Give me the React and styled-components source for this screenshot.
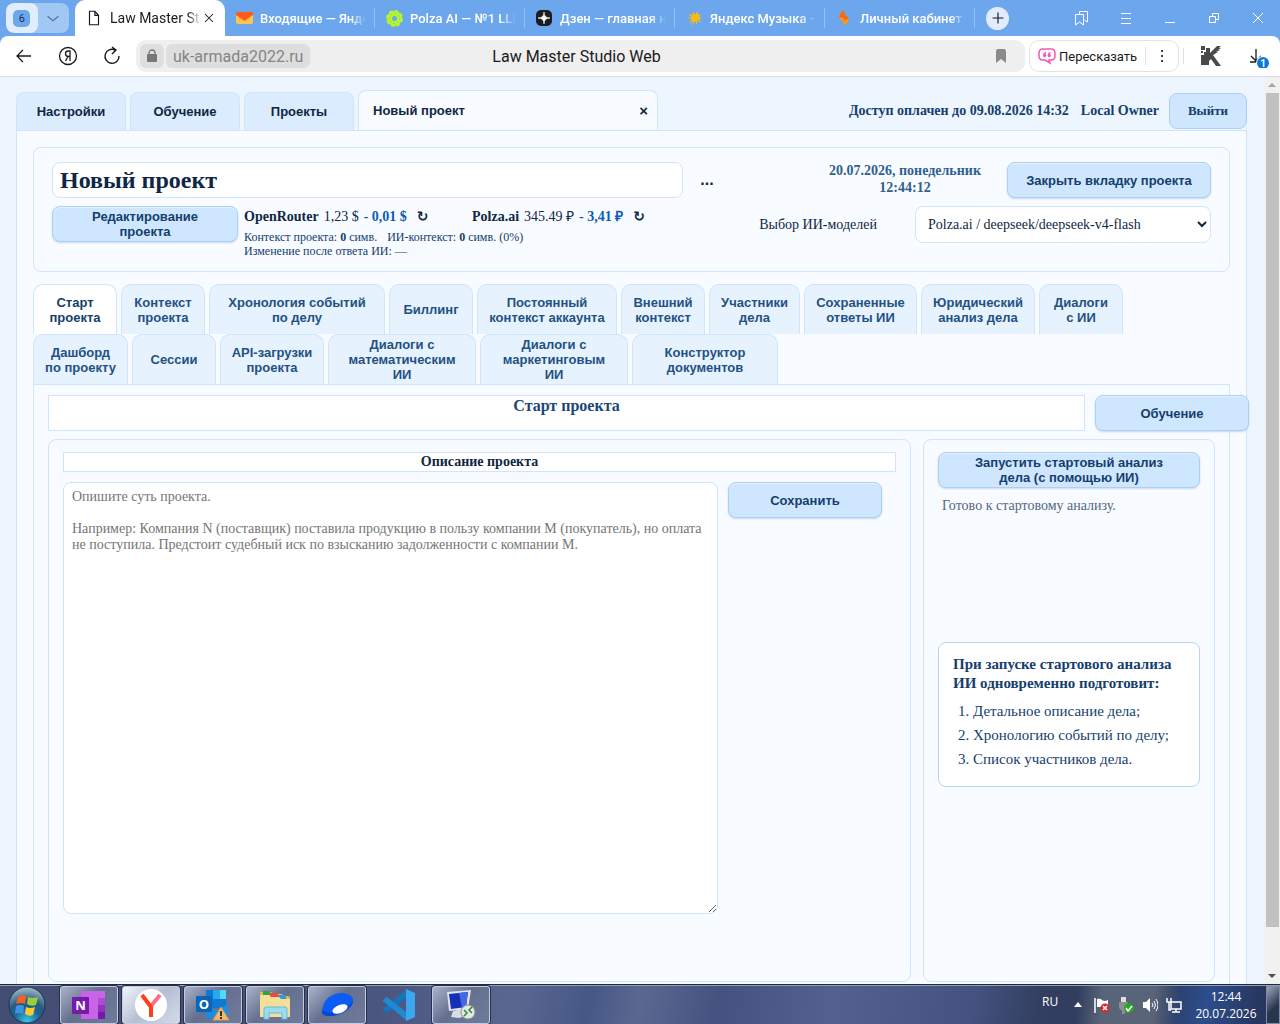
import React from 'react';
import styled, { createGlobalStyle, css } from 'styled-components';

const serif = '"Liberation Serif", "Times New Roman", serif';
const sans = '"Liberation Sans", Arial, sans-serif';
const ui = 'Roboto, "Noto Sans", sans-serif';

const GlobalStyle = createGlobalStyle`
  * { box-sizing: border-box; }
  body {
    margin: 0;
    overflow: hidden;
    color: #0f2744;
    font-family: ${serif};
    font-size: 14px;
  }
  button, input, select, textarea { font: inherit; color: inherit; margin: 0; }
  button { padding: 0; border: 0; background: none; }
  h1, h2, p, ol { margin: 0; }
`;

const Desktop = styled.div`
  display: flex;
  flex-direction: column;
  height: 100vh;
`;

/* browser window */

const TabStrip = styled.div`
  display: flex;
  align-items: center;
  flex: none;
  height: 36px;
  padding-left: 6px;
  background: #6ca7ee;
  font-family: ${ui};
`;

const TabGroup = styled.div`
  display: flex;
  width: 63px;
  height: 30px;
  margin-right: 6px;
  border-radius: 8px;
  background: #a1c7f4;
  overflow: hidden;
`;

const GroupButton = styled.button`
  display: grid;
  place-items: center;
  width: 32px;
  border-radius: 8px;
  background: ${({ $light }) => ($light ? '#e1edfc' : 'transparent')};
`;

const GroupCount = styled.span`
  display: grid;
  place-items: center;
  width: 17px;
  height: 17px;
  border-radius: 5px;
  background: #6ca7ee;
  color: #1c3150;
  font-size: 11px;
`;

const BrowserTab = styled.div`
  display: flex;
  align-items: center;
  flex: none;
  gap: 7px;
  width: 150px;
  height: 20px;
  padding-left: 10px;
  border-right: 1px solid #95c0f3;
  color: #fff;
  font-size: 13px;
  font-weight: 500;
  white-space: nowrap;
  ${({ $active }) => $active && css`
    height: 36px;
    padding-right: 8px;
    border: 0;
    border-radius: 10px 10px 0 0;
    background: #fff;
    color: #1a1a1a;
    font-size: 14px;
    font-weight: 400;
  `}
`;

const TabIcon = styled.span`
  display: grid;
  place-items: center;
  flex: none;
  width: 18px;
`;

const BrowserTabTitle = styled.span`
  flex: 1;
  overflow: hidden;
  margin-right: ${({ $active }) => ($active ? '-7px' : '8px')};
  mask-image: linear-gradient(to right, #000 85%, transparent);
`;

const IconButton = styled.button`
  display: grid;
  place-items: center;
  flex: none;
  width: ${({ $width }) => $width || 44}px;
  height: 30px;
`;

const NewTab = styled(IconButton)`
  width: 23px;
  height: 23px;
  margin: 0 auto 0 11px;
  border-radius: 50%;
  background: #e1edfc;
`;

const ToolbarBack = styled.div`
  flex: none;
  background: #6ca7ee;
`;

const Toolbar = styled.div`
  display: flex;
  align-items: center;
  height: 41px;
  padding-left: 2px;
  border-bottom: 1px solid #d5dbe3;
  border-radius: 8px 8px 0 0;
  background: #fff;
  color: #1a1a1a;
  font-family: ${ui};
`;

const AddressBar = styled.div`
  display: grid;
  grid-template-columns: 1fr auto 1fr;
  align-items: center;
  flex: 1;
  height: 32px;
  margin-left: 2px;
  padding: 0 12px 0 4px;
  border-radius: 10px;
  background: #efefef;
  font-size: 16px;
`;

const AddressSite = styled.div`
  display: flex;
  gap: 2px;
`;

const Chip = styled.button`
  display: grid;
  place-items: center;
  height: 24px;
  padding: 0 7px;
  border-radius: 6px;
  background: #dedede;
  color: #858585;
`;

const BookmarkButton = styled(IconButton)`
  width: 24px;
  justify-self: end;
`;

const Retell = styled.div`
  display: flex;
  align-items: center;
  width: 150px;
  height: 32px;
  margin-left: 4px;
  padding-left: 8px;
  border: 1px solid #e3e3e3;
  border-radius: 10px;
  font-size: 13px;
`;

const RetellButton = styled.button`
  display: flex;
  align-items: center;
  gap: 3px;
  flex: 1;
  border-right: 1px solid #e3e3e3;
`;

const ToolbarDivider = styled.span`
  width: 1px;
  height: 16px;
  margin-left: 4px;
  background: #dedede;
`;

/* page */

const Viewport = styled.div`
  display: flex;
  flex: 1;
  min-height: 0;
`;

const Page = styled.main`
  flex: 1;
  min-width: 0;
  padding: 13px 17px 0 16px;
  overflow: hidden;
  background: #edf5ff;
`;

const Scrollbar = styled.div`
  display: flex;
  flex-direction: column;
  align-items: center;
  flex: none;
  width: 16px;
  background: #f1f1f1;
  svg { flex: none; }
`;

const ScrollThumb = styled.div`
  flex: 834;
  width: 13px;
  background: #c1c1c1;
`;

const ScrollTrack = styled.div`
  flex: 41;
`;

const TopBar = styled.header`
  display: flex;
  align-items: flex-end;
  gap: 4px;
  height: 40px;
`;

const TopTab = styled.button`
  width: 110px;
  height: 38px;
  border: 1px solid #cfe5fd;
  border-bottom: 0;
  border-radius: 8px 8px 0 0;
  background: #dcecff;
  font: bold 13px ${sans};
`;

const ProjectTab = styled.div`
  display: flex;
  align-items: center;
  justify-content: space-between;
  width: 300px;
  height: 40px;
  padding: 0 9px 0 14px;
  border: 1px solid #cfe5fd;
  border-bottom: 0;
  border-radius: 8px 8px 0 0;
  background: #f8fbff;
  button { font: bold 13px ${sans}; }
`;

const CloseProject = styled.button`
  && { font-size: 15px; }
`;

const Account = styled.div`
  display: flex;
  align-items: center;
  gap: 12px;
  height: 38px;
  margin-left: auto;
  color: #153e6e;
  font-weight: bold;
  white-space: nowrap;
`;

const Button = styled.button`
  flex: none;
  width: ${({ $width }) => ($width ? `${$width}px` : '100%')};
  height: 36px;
  border: 1px solid #a9d0f6;
  border-radius: 8px;
  background: #cfe6ff;
  box-shadow: inset 0 1px 0 #e6f2ff, 0 1px 2px rgba(30, 80, 140, 0.2);
  color: #153e6e;
  font: bold 13px/15px ${sans};
  white-space: pre-line;
`;

const LogoutButton = styled(Button)`
  margin-left: -2px;
  box-shadow: none;
  font: bold 13px ${serif};
`;

const Panel = styled.div`
  min-height: 100%;
  padding: 16px;
  border: 1px solid #cfe5fd;
  background: #f8fbff;
`;

const ProjectHeader = styled.section`
  display: flex;
  flex-direction: column;
  gap: 8px;
  padding: 14px 18px 13px;
  border: 1px solid #cfe5fd;
  border-radius: 8px;
`;

const HeaderRow = styled.div`
  display: grid;
  grid-template-columns: 1fr 120px 204px 204px;
  align-items: center;
`;

const ProjectName = styled.input`
  width: 100%;
  height: 36px;
  padding: 0 7px;
  border: 1px solid #cfe5fd;
  border-radius: 8px;
  background: #fff;
  font-size: 24px;
  font-weight: bold;
`;

const MoreButton = styled.button`
  width: 48px;
  height: 36px;
  font: bold 16px ${sans};
`;

const DateTime = styled.time`
  padding-bottom: 2px;
  color: #315f8f;
  font-weight: bold;
  line-height: 17px;
  text-align: center;
  white-space: pre-line;
`;

const InfoRow = styled.div`
  display: flex;
  align-items: flex-start;
  gap: 6px;
`;

const Usage = styled.div`
  flex: 1;
  color: #153e6e;
  font-size: 12px;
  line-height: 14px;
`;

const Balances = styled.div`
  display: flex;
  height: 24px;
  color: #0f2744;
  font-size: 14px;
  line-height: 22px;
`;

const Balance = styled.div`
  display: flex;
  gap: 5px;
  min-width: 228px;
`;

const RefreshButton = styled.button`
  height: 20px;
  margin-left: 5px;
  font: bold 14px/20px "DejaVu Sans", sans-serif;
`;

const Change = styled.strong`
  color: #0b5bb8;
`;

const ContextLine = styled.div`
  display: flex;
  gap: 10px;
`;

const ModelPicker = styled.div`
  display: flex;
  align-items: center;
  gap: 38px;
`;

const ModelSelect = styled.select`
  width: 296px;
  height: 37px;
  padding: 0 8px;
  border: 1px solid #cfe5fd;
  border-radius: 8px;
  background: #fff;
`;

const SectionTabs = styled.nav`
  display: flex;
  flex-wrap: wrap;
  column-gap: 4px;
  margin-top: 12px;
  padding-right: 16px;
`;

const SectionTab = styled.button`
  width: ${({ $width }) => $width}px;
  height: 50px;
  border: 1px solid #cfe5fd;
  border-bottom: 0;
  border-radius: 10px 10px 0 0;
  background: ${({ $active }) => ($active ? '#fff' : '#e7f2ff')};
  color: ${({ $active }) => ($active ? '#153e6e' : '#235182')};
  font: bold 13px/15px ${sans};
  white-space: pre-line;
`;

const SectionPanel = styled.section`
  padding: 10px 14px 14px;
  border: 1px solid #cfe5fd;
  border-bottom: 0;
`;

const SectionHead = styled.div`
  display: flex;
  gap: 10px;
  margin-right: -34px;
`;

const SectionTitle = styled.h1`
  flex: 1;
  height: 36px;
  border: 1px solid #cfe5fd;
  background: #fff;
  color: #1c4778;
  font-size: 16px;
  line-height: 20px;
  text-align: center;
`;

const Columns = styled.div`
  display: grid;
  grid-template-columns: 1fr 292px;
  gap: 12px;
  margin-top: 8px;
`;

const Card = styled.div`
  min-height: 543px;
  padding: 12px 14px;
  border: 1px solid #cfe5fd;
  border-radius: 8px;
`;

const CardTitle = styled.h2`
  height: 20px;
  margin-bottom: 10px;
  border: 1px solid #cfe5fd;
  background: #fff;
  font-size: 14px;
  line-height: 18px;
  text-align: center;
`;

const Editor = styled.div`
  display: flex;
  align-items: flex-start;
  gap: 10px;
  padding-right: 14px;
`;

const Description = styled.textarea`
  flex: 1;
  height: 432px;
  padding: 6px 8px;
  border: 1px solid #cfe5fd;
  border-radius: 8px;
  background: #fff;
  line-height: 16px;
  resize: both;
  &::placeholder { color: #757575; }
`;

const Status = styled.p`
  height: 154px;
  padding: 10px 4px;
  color: #52677f;
  line-height: 16px;
`;

const Note = styled.div`
  padding: 12px 14px 15px;
  border: 1px solid #b5d6f8;
  border-radius: 8px;
  background: #fff;
  color: #153e6e;
  font-size: 15px;
  line-height: 19px;
`;

const NoteList = styled.ol`
  padding: 6px 0 0 20px;
  line-height: 24px;
`;

/* taskbar */

const Taskbar = styled.footer`
  display: flex;
  align-items: center;
  flex: none;
  height: 40px;
  padding-left: 8px;
  border-top: 1px solid #202a3a;
  box-shadow: inset 0 1px 0 #8aa0b8;
  background:
    linear-gradient(95deg, transparent 84%, #5a6478 86% 90%, transparent 92%),
    linear-gradient(100deg, #434d72 0%, #4b5680 30%, #5a6891 40%, #475784 46%, #5a6891 50%, #44527f 56%, #52618d 65%, #43527f 76%, #323f60 81%, #2c3a5c 90%, #2d4d8c 94%, #283760 98%);
  color: #fff;
  font: 12px "Open Sans", "Noto Sans", sans-serif;
`;

const StartButton = styled.button`
  width: 38px;
  height: 38px;
  margin-right: 14px;
`;

const TaskButton = styled.button`
  display: grid;
  place-items: center;
  width: 58px;
  height: 38px;
  margin-right: 4px;
  border: 1px solid ${({ $plain }) => ($plain ? 'transparent' : '#c4cbdc')};
  border-radius: 3px;
  background: ${({ $plain, $active }) => {
    if ($plain) return 'none';
    return $active
      ? 'linear-gradient(135deg, #f2f5fa, #b5bfd3 50%, #d5dae7)'
      : 'linear-gradient(135deg, #a9b2c9, #65708f 45%, #707b9c)';
  }};
  box-shadow: ${({ $plain }) => ($plain ? 'none' : '0 0 0 1px #28314c')};
`;

const Tray = styled.div`
  display: flex;
  align-items: center;
  margin-left: auto;
  height: 100%;
`;

const Language = styled.span`
  width: 24px;
  padding-bottom: 6px;
`;

const Clock = styled.time`
  width: 80px;
  line-height: 17px;
  text-align: center;
  white-space: pre-line;
`;

const ShowDesktop = styled.button`
  width: 14px;
  height: 38px;
  border: 1px solid #7e8ba0;
  background: linear-gradient(135deg, #9aa4b3, #29354f 60%);
`;

const TrayButton = styled.button`
  display: grid;
  place-items: center;
  width: 24px;
  height: 24px;
`;

const Line = ({ size = 20, d, color = '#1a1a1a', width = 1 }) => (
  <svg width={size} height={size} viewBox="0 0 20 20" fill="none" stroke={color} strokeWidth={width}>
    <path d={d} />
  </svg>
);

const MailIcon = () => (
  <svg width="17" height="14" viewBox="0 0 17 14">
    <rect y="1" width="17" height="12" rx="2" fill="#ffc44d" />
    <path d="M0 2q0-1 1-1h15q1 0 1 1v2L8.500 10 0 4z" fill="#ff5a1f" />
  </svg>
);

const PolzaIcon = () => (
  <svg width="17" height="17" viewBox="0 0 17 17">
    <circle cx="8.500" cy="8.500" r="5" fill="none" stroke="#b4f52c" strokeWidth="5" />
    <circle cx="8.500" cy="8.500" r="7" fill="none" stroke="#b4f52c" strokeWidth="3" strokeDasharray="3.500 2" />
    <circle cx="8.500" cy="8.500" r="5" fill="none" stroke="#6ca7ee" strokeDasharray="1 2.900" />
  </svg>
);

const ZenIcon = () => (
  <svg width="16" height="16" viewBox="0 0 16 16">
    <rect width="16" height="16" rx="5" fill="#1b1d21" />
    <path d="M8 2q0 6 6 6-6 0-6 6 0-6-6-6 6 0 6-6z" fill="#fff" stroke="#fff" strokeWidth=".6" />
  </svg>
);

const MusicIcon = () => (
  <svg width="15" height="15" viewBox="0 0 15 15">
    <path
      d="M6 0l2 4 3-4 0 4 3-1-2 3 3 1-3 1 2 4-4-3 0 5-2-4-3 5 1-5-4 2 3-4-5-1 5-1-4-3 5 1z"
      fill="#ffbc0d"
    />
  </svg>
);

const CabinetIcon = () => (
  <svg width="12" height="16" viewBox="0 0 12 16">
    <path d="M6 0l1 5 4 3-5 3-2-4-3 1 1-4z" fill="#ff6a00" />
    <path d="M6 16l-1-5-4-2 3-2 3 4 4-3-1 4z" fill="#ff9416" />
  </svg>
);

const browserTabs = [
  { title: 'Входящие — Яндекс', icon: <MailIcon /> },
  { title: 'Polza AI — №1 LLM', icon: <PolzaIcon /> },
  { title: 'Дзен — главная новости', icon: <ZenIcon /> },
  { title: 'Яндекс Музыка — со', icon: <MusicIcon /> },
  { title: 'Личный кабинет — ', icon: <CabinetIcon /> },
];

const windowButtons = [
  { label: 'Закладки', d: 'M3.500 6.500h8v10.500l-4-3-4 3zM7.500 6.500v-3h8v10.500l-3-2' },
  { label: 'Меню', d: 'M5 5.500h10M5 10.500h10M5 15.500h10' },
  { label: 'Свернуть', d: 'M5 14.500h10' },
  { label: 'Восстановить', d: 'M5.500 8.500h6v6h-6zM8.500 8V5.500h6v6h-3' },
  { label: 'Закрыть', d: 'M5 5l10 10M15 5L5 15' },
];

const sectionTabs = [
  { title: 'Старт\nпроекта', width: 84 },
  { title: 'Контекст\nпроекта', width: 84 },
  { title: 'Хронология событий\nпо делу', width: 176 },
  { title: 'Биллинг', width: 84 },
  { title: 'Постоянный\nконтекст аккаунта', width: 140 },
  { title: 'Внешний\nконтекст', width: 84 },
  { title: 'Участники\nдела', width: 91 },
  { title: 'Сохраненные\nответы ИИ', width: 113 },
  { title: 'Юридический\nанализ дела', width: 114 },
  { title: 'Диалоги\nс ИИ', width: 84 },
  { title: 'Дашборд\nпо проекту', width: 95 },
  { title: 'Сессии', width: 84 },
  { title: 'API-загрузки\nпроекта', width: 104 },
  { title: 'Диалоги с\nматематическим\nИИ', width: 148 },
  { title: 'Диалоги с\nмаркетинговым\nИИ', width: 148 },
  { title: 'Конструктор\nдокументов', width: 146 },
];

const placeholder = `Опишите суть проекта.

Например: Компания N (поставщик) поставила продукцию в пользу компании М (покупатель), но оплата не поступила. Предстоит судебный иск по взысканию задолженности с компании М.`;

const BrowserChrome = () => (
  <>
    <TabStrip>
      <TabGroup>
        <GroupButton $light aria-label="Группа вкладок"><GroupCount>6</GroupCount></GroupButton>
        <GroupButton aria-label="Список вкладок">
          <Line size={18} d="M4 8l6 5 6-5" color="#5a7698" width={1.500} />
        </GroupButton>
      </TabGroup>
      <BrowserTab $active>
        <TabIcon><Line size={18} d="M5 2.500h6l4 4.500v10.500H5zM11 2.500V7h4" width={1.300} /></TabIcon>
        <BrowserTabTitle $active>Law Master Studio</BrowserTabTitle>
        <IconButton $width={16} aria-label="Закрыть вкладку">
          <Line size={16} d="M5 5l10 10M15 5L5 15" width={1.300} />
        </IconButton>
      </BrowserTab>
      {browserTabs.map(({ title, icon }) => (
        <BrowserTab key={title}>
          <TabIcon>{icon}</TabIcon>
          <BrowserTabTitle>{title}</BrowserTabTitle>
        </BrowserTab>
      ))}
      <NewTab aria-label="Новая вкладка"><Line size={18} d="M10 4v12M4 10h12" width={1.300} /></NewTab>
      {windowButtons.map(({ label, d }) => (
        <IconButton key={label} aria-label={label}><Line d={d} color="#fff" /></IconButton>
      ))}
    </TabStrip>
    <ToolbarBack>
      <Toolbar>
        <IconButton aria-label="Назад"><Line d="M17 10H3M9 4l-6 6 6 6" width={1.300} /></IconButton>
        <IconButton aria-label="Яндекс">
          <svg width="20" height="20" viewBox="0 0 20 20" fill="none" stroke="#1a1a1a" strokeWidth="1.300">
            <circle cx="10" cy="10" r="8.500" />
            <path d="M12 15V5h-1.500C6.500 5 6.500 10.500 10.500 10.500H12M10 10.500L7.500 15" />
          </svg>
        </IconButton>
        <IconButton aria-label="Обновить">
          <Line d="M13 4a7 7 0 1 0 4 6M10 1l4 3-4 4" width={1.400} />
        </IconButton>
        <AddressBar>
          <AddressSite>
            <Chip aria-label="Соединение защищено">
              <svg width="10" height="14" viewBox="0 0 10 14">
                <rect y="5" width="10" height="8" rx="1" fill="#777" />
                <path d="M2 6V4a3 3 0 0 1 6 0v2" fill="none" stroke="#777" strokeWidth="1.300" />
              </svg>
            </Chip>
            <Chip>uk-armada2022.ru</Chip>
          </AddressSite>
          <span>Law Master Studio Web</span>
          <BookmarkButton aria-label="В закладки">
            <svg width="10" height="14" viewBox="0 0 10 14"><path d="M0 2q0-2 2-2h6q2 0 2 2v12l-5-4-5 4z" fill="#8a8a8a" /></svg>
          </BookmarkButton>
        </AddressBar>
        <Retell>
          <RetellButton>
            <svg width="18" height="18" viewBox="0 0 18 18" fill="none" stroke="#f457b4" strokeWidth="1.500">
              <path d="M5 2h8q4 0 4 4v3q0 4-4 4h-2l1 3-5-3H5q-4 0-4-4V6q0-4 4-4z" />
              <path d="M8 5.500Q6 6 6 8M12.500 5.500q-2 .5-2 2.500" />
              <circle cx="6.700" cy="8.500" r=".9" fill="#f457b4" />
              <circle cx="11.200" cy="8.500" r=".9" fill="#f457b4" />
            </svg>
            Пересказать
          </RetellButton>
          <IconButton $width={32} aria-label="Ещё">
            <svg width="4" height="14" viewBox="0 0 4 14">
              <circle cx="2" cy="2" r="1" /><circle cx="2" cy="7" r="1" /><circle cx="2" cy="12" r="1" />
            </svg>
          </IconButton>
        </Retell>
        <ToolbarDivider />
        <IconButton $width={54} aria-label="Расширение">
          <svg width="22" height="20" viewBox="0 0 22 20" fill="#4a4a4a">
            <path d="M1 0h4v4H1zM6 2h4v5l4-4 3-3h4l-2 2h2l-3 2h2l-4 2h2l-5 3 8 11h-5l-5-7-2 2v4H1V9h3V6h2zM1 5h2v2H1z" />
          </svg>
        </IconButton>
        <IconButton $width={42} aria-label="Загрузки">
          <svg width="24" height="24" viewBox="0 0 24 24">
            <path d="M9 5v12M4 12l5 5 5-5M3 18h12" fill="none" stroke="#1a1a1a" strokeWidth="1.300" />
            <circle cx="16" cy="19" r="7" fill="#fff" />
            <circle cx="16" cy="19" r="6" fill="#0b78dc" />
            <text x="16" y="23" fill="#fff" fontSize="10" fontWeight="bold" textAnchor="middle">1</text>
          </svg>
        </IconButton>
      </Toolbar>
    </ToolbarBack>
  </>
);

const Header = () => (
  <ProjectHeader>
    <HeaderRow>
      <ProjectName aria-label="Название проекта" defaultValue="Новый проект" />
      <MoreButton>...</MoreButton>
      <DateTime>{'20.07.2026, понедельник\n12:44:12'}</DateTime>
      <Button>Закрыть вкладку проекта</Button>
    </HeaderRow>
    <InfoRow>
      <Button $width={186}>{'Редактирование\nпроекта'}</Button>
      <Usage>
        <Balances>
          <Balance>
            <strong>OpenRouter</strong>
            <span>1,23 $</span>
            <Change>- 0,01 $</Change>
            <RefreshButton aria-label="Обновить баланс OpenRouter">↻</RefreshButton>
          </Balance>
          <Balance>
            <strong>Polza.ai</strong>
            <span>345.49 ₽</span>
            <Change>- 3,41 ₽</Change>
            <RefreshButton aria-label="Обновить баланс Polza.ai">↻</RefreshButton>
          </Balance>
        </Balances>
        <ContextLine>
          <span>Контекст проекта: <b>0</b> симв.</span>
          <span>ИИ-контекст: <b>0</b> симв. (0%)</span>
        </ContextLine>
        <div>Изменение после ответа ИИ: —</div>
      </Usage>
      <ModelPicker>
        <label htmlFor="model">Выбор ИИ-моделей</label>
        <ModelSelect id="model">
          <option>Polza.ai / deepseek/deepseek-v4-flash</option>
        </ModelSelect>
      </ModelPicker>
    </InfoRow>
  </ProjectHeader>
);

const StartSection = () => (
  <SectionPanel>
    <SectionHead>
      <SectionTitle>Старт проекта</SectionTitle>
      <Button $width={154}>Обучение</Button>
    </SectionHead>
    <Columns>
      <Card>
        <CardTitle>Описание проекта</CardTitle>
        <Editor>
          <Description aria-label="Описание проекта" placeholder={placeholder} />
          <Button $width={154}>Сохранить</Button>
        </Editor>
      </Card>
      <Card>
        <Button>{'Запустить стартовый анализ\nдела (с помощью ИИ)'}</Button>
        <Status>Готово к стартовому анализу.</Status>
        <Note>
          <strong>При запуске стартового анализа ИИ одновременно подготовит:</strong>
          <NoteList>
            <li>Детальное описание дела;</li>
            <li>Хронологию событий по делу;</li>
            <li>Список участников дела.</li>
          </NoteList>
        </Note>
      </Card>
    </Columns>
  </SectionPanel>
);

const OneNoteIcon = () => (
  <svg width="34" height="30" viewBox="0 0 34 30">
    <path d="M9 1h24v28H9z" fill="#c864e8" />
    <path d="M26 8h7v7h-7z" fill="#ae4bd5" />
    <path d="M26 15h7v7h-7z" fill="#9332bf" />
    <path d="M26 22h7v7h-7z" fill="#7719aa" />
    <rect y="7" width="17" height="17" rx="1" fill="#7719aa" />
    <text x="8.500" y="20" fill="#fff" fontSize="13" fontWeight="bold" textAnchor="middle">N</text>
  </svg>
);

const YandexIcon = () => (
  <svg width="32" height="32" viewBox="0 0 32 32">
    <circle cx="16" cy="16" r="16" fill="#fff" />
    <path d="M25 6l-9 11" fill="none" stroke="#ff6d8c" strokeWidth="4" />
    <path d="M7 6l9 12v10" fill="none" stroke="#fc3f1d" strokeWidth="4" />
  </svg>
);

const OutlookIcon = () => (
  <svg width="34" height="32" viewBox="0 0 34 32">
    <path d="M10 1h20v18H10z" fill="#0f78d4" />
    <path d="M17 1h7v9h-7z" fill="#28a8ea" />
    <path d="M24 1h6v9h-6z" fill="#50d9ff" />
    <path d="M10 16l11 6 11-7v12q0 2-2 2H10z" fill="#1a8fe0" />
    <rect y="7" width="16" height="16" rx="1" fill="#0a64b8" />
    <text x="8" y="20" fill="#fff" fontSize="13" fontWeight="bold" textAnchor="middle">O</text>
    <path d="M25 18l8 13H17z" fill="#f3b871" stroke="#d99a50" />
    <path d="M25 22v5M25 28v2" stroke="#333" strokeWidth="2" />
  </svg>
);

const FolderIcon = () => (
  <svg width="34" height="32" viewBox="0 0 34 32">
    <path d="M2 3h11l2 2h9l2 2h4q2 0 2 2v18H2z" fill="#dcb95c" />
    <path d="M5 2h7v4H5z" fill="#28a745" />
    <path d="M12 4h8v4h-8z" fill="#e74c3c" />
    <path d="M20 6h8v4h-8z" fill="#3498db" />
    <path d="M2 6h9l2 2h8l2 2h9v18H2z" fill="#f5df98" />
    <path d="M6 30V20q0-2 2-2h19q2 0 2 2v10h-5v-6H11v6z" fill="#9bdcf2" stroke="#66b9dc" />
  </svg>
);

const DiskIcon = () => (
  <svg width="34" height="28" viewBox="0 0 34 28">
    <path d="M3 15C6 4 20 0 27 3q7 2 6 8c-1 9-20 17-29 13q-3-2-1-9z" fill="#0a5cf5" />
    <path d="M2 19c4 5 24 1 31-9-1 10-20 18-29 14q-3-2-2-5z" fill="#0646d8" />
    <ellipse cx="20" cy="18" rx="8" ry="4" transform="rotate(-22 20 18)" fill="#fff" />
  </svg>
);

const CodeIcon = () => (
  <svg width="32" height="32" viewBox="0 0 32 32">
    <path d="M23 1v8L4 24l-4-3v-1z" fill="#1674bd" />
    <path d="M23 31v-8L4 8l-4 3v1z" fill="#1f8ad2" />
    <path d="M23 0l9 4v24l-9 4z" fill="#3ba7ee" />
  </svg>
);

const RemoteIcon = () => (
  <svg width="32" height="32" viewBox="0 0 32 32">
    <path d="M8 22l10-2 2 7-6 2-8-1z" fill="#d8dde3" />
    <path d="M2 3l24-2-3 19-19 2z" fill="#dfe5ee" />
    <path d="M4 5l19-2-2 15-15 2z" fill="#1430b8" />
    <path d="M14 4l9-1-2 15-4 1z" fill="#4468e4" />
    <circle cx="23" cy="23" r="7" fill="#e5e8e5" stroke="#8b9090" />
    <path d="M19 21l3 3-3 3M27 18l-3 3 3 3" fill="none" stroke="#2d8a35" strokeWidth="1.500" />
  </svg>
);

const tasks = [
  { label: 'OneNote', icon: <OneNoteIcon /> },
  { label: 'Яндекс Браузер', icon: <YandexIcon />, active: true },
  { label: 'Outlook', icon: <OutlookIcon /> },
  { label: 'Проводник', icon: <FolderIcon /> },
  { label: 'Яндекс Диск', icon: <DiskIcon /> },
  { label: 'Visual Studio Code', icon: <CodeIcon />, plain: true },
  { label: 'Удалённый рабочий стол', icon: <RemoteIcon /> },
];

const WindowsTaskbar = () => (
  <Taskbar>
    <StartButton aria-label="Пуск">
      <svg width="38" height="38" viewBox="0 0 38 38">
        <defs>
          <radialGradient id="orb" cx="50%" cy="95%" r="95%">
            <stop offset="0" stopColor="#35c8ee" />
            <stop offset=".4" stopColor="#1c628f" />
            <stop offset=".6" stopColor="#2b5b7c" />
            <stop offset="1" stopColor="#a5c0cf" />
          </radialGradient>
        </defs>
        <circle cx="19" cy="19" r="18" fill="url(#orb)" stroke="#1b3450" />
        <path d="M10 11q4-3 8-1l-1 8q-4-2-9 0z" fill="#f0622c" />
        <path d="M20 11q4 2 10 0l-2 8q-5 2-9-1z" fill="#9bcf3c" />
        <path d="M8 20q4-2 8 0l-1 8q-4-2-8 0z" fill="#3d94e0" />
        <path d="M18 21q4 2 9 0l-2 8q-4 2-8-1z" fill="#fcc92e" />
      </svg>
    </StartButton>
    {tasks.map(({ label, icon, active, plain }) => (
      <TaskButton key={label} aria-label={label} $active={active} $plain={plain}>{icon}</TaskButton>
    ))}
    <Tray>
      <Language>RU</Language>
      <TrayButton aria-label="Скрытые значки">
        <svg width="8" height="5" viewBox="0 0 8 5"><path d="M4 0l4 5H0z" fill="#fff" /></svg>
      </TrayButton>
      <TrayButton aria-label="Центр поддержки">
        <svg width="16" height="16" viewBox="0 0 16 16">
          <path d="M1 1v15" stroke="#fff" strokeWidth="1.500" />
          <path d="M3 2q3-1 5 1t6 0v7H3z" fill="#fff" />
          <circle cx="11" cy="11" r="4.500" fill="#d92b2b" />
          <path d="M9 9l4 4M13 9l-4 4" stroke="#fff" strokeWidth="1.500" />
        </svg>
      </TrayButton>
      <TrayButton aria-label="Безопасное извлечение">
        <svg width="16" height="18" viewBox="0 0 16 18">
          <path d="M3 1h5v5H3z" fill="#ddd" />
          <path d="M1 6h9v6l-3 3v3H4v-3l-3-3z" fill="#8b8f95" />
          <circle cx="11" cy="12" r="5" fill="#2aa52a" />
          <path d="M8 12l2 3 4-5" fill="none" stroke="#fff" strokeWidth="1.500" />
        </svg>
      </TrayButton>
      <TrayButton aria-label="Громкость">
        <svg width="16" height="16" viewBox="0 0 16 16">
          <path d="M1 5h3l4-4v14l-4-4H1z" fill="#fff" />
          <path d="M10 6q2 2 0 4M12 4q3 4 0 8M14 2q4 6 0 12" fill="none" stroke="#fff" />
        </svg>
      </TrayButton>
      <TrayButton aria-label="Сеть">
        <svg width="16" height="16" viewBox="0 0 16 16" fill="none" stroke="#fff" strokeWidth="1.500">
          <path d="M5 5h10v7H5zM6 15h8M10 12v3M1 1v4h4V1M3 5v8h2" />
        </svg>
      </TrayButton>
      <Clock>{'12:44\n20.07.2026'}</Clock>
      <ShowDesktop aria-label="Свернуть все окна" />
    </Tray>
  </Taskbar>
);

const App = () => (
  <Desktop>
    <GlobalStyle />
    <BrowserChrome />
    <Viewport>
      <Page>
        <TopBar>
          <TopTab>Настройки</TopTab>
          <TopTab>Обучение</TopTab>
          <TopTab>Проекты</TopTab>
          <ProjectTab>
            <button>Новый проект</button>
            <CloseProject aria-label="Закрыть проект">×</CloseProject>
          </ProjectTab>
          <Account>
            <span>Доступ оплачен до 09.08.2026 14:32</span>
            <span>Local Owner</span>
            <LogoutButton $width={78}>Выйти</LogoutButton>
          </Account>
        </TopBar>
        <Panel>
          <Header />
          <SectionTabs>
            {sectionTabs.map(({ title, width }, index) => (
              <SectionTab key={title} $width={width} $active={index === 0}>{title}</SectionTab>
            ))}
          </SectionTabs>
          <StartSection />
        </Panel>
      </Page>
      <Scrollbar>
        <svg width="8" height="16" viewBox="0 0 8 16"><path d="M0 10h8l-4-4z" fill="#a3a3a3" /></svg>
        <ScrollThumb />
        <ScrollTrack />
        <svg width="8" height="16" viewBox="0 0 8 16"><path d="M0 6h8l-4 4z" fill="#505050" /></svg>
      </Scrollbar>
    </Viewport>
    <WindowsTaskbar />
  </Desktop>
);

export default App;
